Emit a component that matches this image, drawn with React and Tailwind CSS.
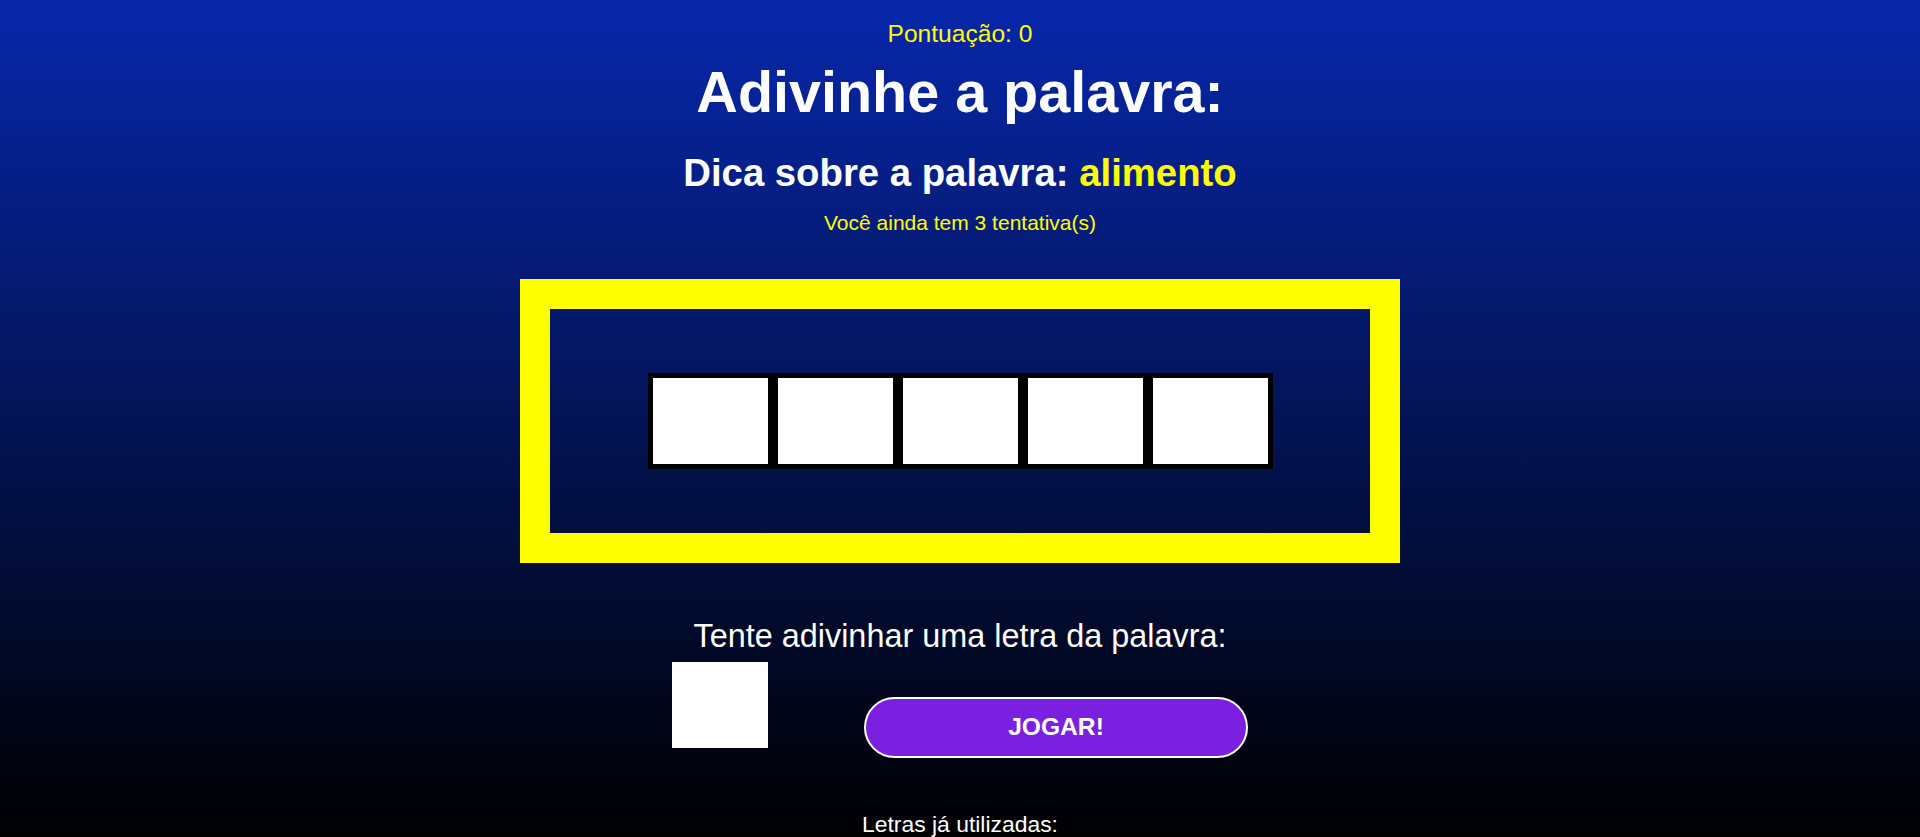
import React, { useState } from "react";

function App() {
  const [letter, setLetter] = useState("");
  const slots = ["", "", "", "", ""];

  return (
    <div
      className="min-h-screen w-full bg-[linear-gradient(to_bottom,#0727ab,#000000)] flex flex-col items-center pt-[19px] text-white"
      style={{ fontFamily: '"Liberation Sans", Arial, sans-serif' }}
    >
      {/* Score */}
      <p className="text-[24.6px] leading-[30px] text-[#ffff00]">Pontuação: 0</p>

      <h1 className="mt-[10px] text-[57.5px] leading-[66px] font-bold">Adivinhe a palavra:</h1>

      <h2 className="mt-[26px] text-[38.3px] leading-[44px] font-bold">
        Dica sobre a palavra: <span className="text-[#ffff00]">alimento</span>
      </h2>

      <p className="mt-[15px] text-[21px] leading-[26px] text-[#ffff00]">Você ainda tem 3 tentativa(s)</p>

      {/* Word board */}
      <div className="mt-[43px] w-[880px] h-[284px] border-[30px] border-[#ffff00] flex items-center justify-center">
        <div className="flex">
          {slots.map((s, i) => (
            <div
              key={i}
              className="w-[125px] h-[96px] border-[5px] border-black bg-white flex items-center justify-center text-black text-[48px] font-bold"
            >
              {s}
            </div>
          ))}
        </div>
      </div>

      <p className="mt-[54px] text-[32.4px] leading-[38px]">Tente adivinhar uma letra da palavra:</p>

      {/* Guess form */}
      <div className="mt-[7px] flex items-start gap-[96px]">
        <input
          value={letter}
          onChange={(e) => setLetter(e.target.value.slice(0, 1))}
          maxLength={1}
          className="w-[96px] h-[86px] bg-white text-black text-center text-[40px] outline-none"
        />
        <button className="mt-[35px] w-[384px] h-[61px] rounded-full border-2 border-white bg-[#7b20e0] text-[24.6px] font-bold text-white">
          JOGAR!
        </button>
      </div>

      <p className="mt-[52px] text-[22.9px] leading-[28px]">Letras já utilizadas:</p>
    </div>
  );
}

export default App;
